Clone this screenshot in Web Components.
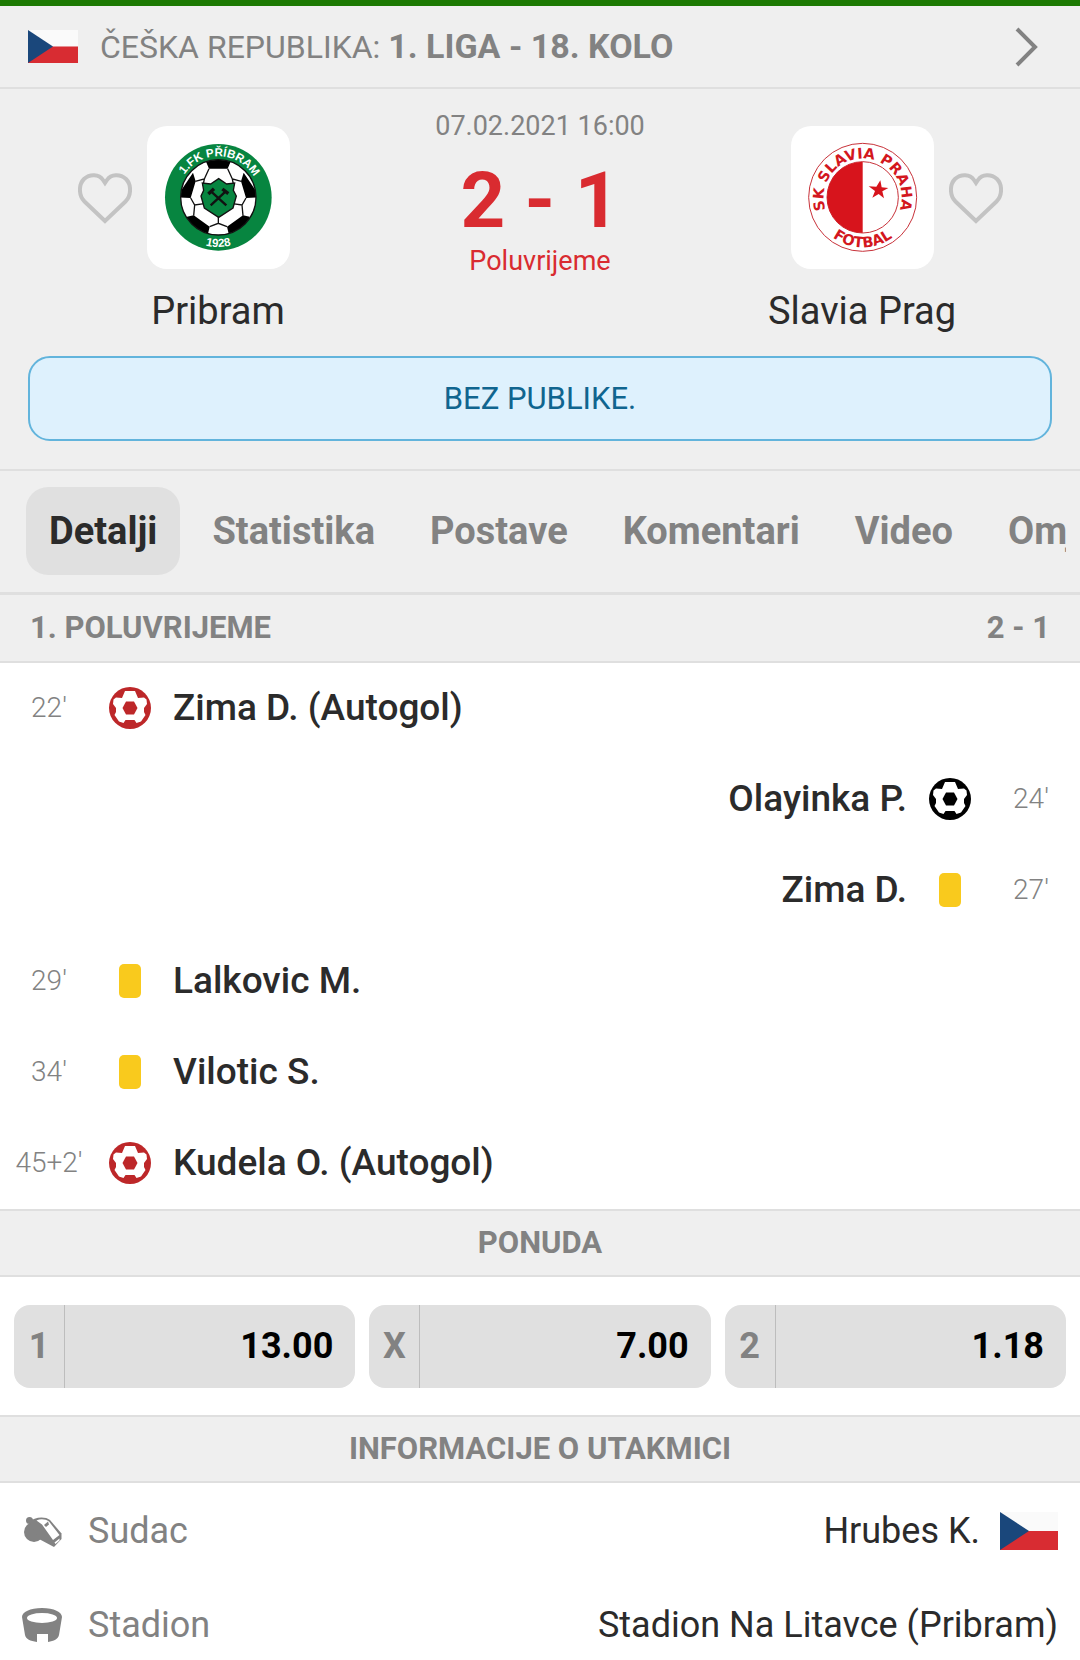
<!DOCTYPE html>
<html lang="hr">
<head>
    <meta charset="utf-8">
    <meta name="viewport" content="width=device-width, initial-scale=1">
    <title>Pribram - Slavia Prag</title>
    <style>
        :root {
            --panel: #efefef;
            --line: #dfdfdf;
            --chip: #e0e0e0;
            --muted: #828282;
            --ink: #2b2b2b;
            --red: #d92b30;
        }

        body {
            margin: 0;
            background: #fff;
            color: var(--ink);
            font-family: Roboto, "Liberation Sans", sans-serif;
            font-size: 36px;
            line-height: 46px;
        }

        main {
            display: flex;
            flex-direction: column;
        }
    </style>
</head>
<body>
    <main>
        <league-bar country="ČEŠKA REPUBLIKA:">1. LIGA - 18. KOLO</league-bar>

        <match-summary date="07.02.2021 16:00" score="2 - 1" status="Poluvrijeme">
            <team-card slot="home" name="Pribram"><pribram-crest></pribram-crest></team-card>
            <team-card slot="away" name="Slavia Prag" mirrored><slavia-crest></slavia-crest></team-card>
            <span slot="notice">BEZ PUBLIKE.</span>
        </match-summary>

        <tab-bar>
            <tab-item selected>Detalji</tab-item>
            <tab-item>Statistika</tab-item>
            <tab-item>Postave</tab-item>
            <tab-item>Komentari</tab-item>
            <tab-item>Video</tab-item>
            <tab-item>Omjer</tab-item>
        </tab-bar>

        <section-title split>1. POLUVRIJEME<span slot="end">2 - 1</span></section-title>
        <match-event time="22'" type="own-goal">Zima D. (Autogol)</match-event>
        <match-event time="24'" type="goal" away>Olayinka P.</match-event>
        <match-event time="27'" type="yellow" away>Zima D.</match-event>
        <match-event time="29'" type="yellow">Lalkovic M.</match-event>
        <match-event time="34'" type="yellow">Vilotic S.</match-event>
        <match-event time="45+2'" type="own-goal">Kudela O. (Autogol)</match-event>

        <section-title ruled>PONUDA</section-title>
        <odds-list>
            <odds-button label="1">13.00</odds-button>
            <odds-button label="X">7.00</odds-button>
            <odds-button label="2">1.18</odds-button>
        </odds-list>

        <section-title ruled>INFORMACIJE O UTAKMICI</section-title>
        <info-list>
            <info-row label="Sudac" icon="whistle">Hrubes K.<country-flag slot="flag" large></country-flag></info-row>
            <info-row label="Stadion" icon="stadium">Stadion Na Litavce (Pribram)</info-row>
        </info-list>
    </main>

    <script>
        // every component renders its html once into an open shadow root
        class BaseElement extends HTMLElement {
            constructor() {
                super();
                this.attachShadow({ mode: 'open' });
            }

            connectedCallback() {
                const template = document.createElement('template');
                template.innerHTML = this.render();
                this.shadowRoot.replaceChildren(template.content.cloneNode(true));
            }
        }

        class CountryFlag extends BaseElement {
            render() {
                return `
                    <style>
                        :host { display: block; flex: none; width: 50px; height: 33px; }
                        :host([large]) { width: 58px; height: 38px; }
                        svg { display: block; width: 100%; height: 100%; }
                    </style>
                    <svg viewBox="0 0 60 40" preserveAspectRatio="none" role="img" aria-label="Češka">
                        <path fill="#fafafa" d="M0 0h60v20H0z"/>
                        <path fill="#d82c32" d="M0 20h60v20H0z"/>
                        <path fill="#1a477b" d="M0 0l30 20L0 40z"/>
                    </svg>
                `;
            }
        }

        class LeagueBar extends BaseElement {
            render() {
                return `
                    <style>
                        :host {
                            display: block;
                            background: var(--panel);
                            border-top: 6px solid #1d7a03;
                            border-bottom: 2px solid var(--line);
                        }
                        a {
                            display: flex;
                            align-items: center;
                            gap: 22px;
                            padding: 17px 42px 17px 28px;
                            color: var(--muted);
                            font-size: 32px;
                            text-decoration: none;
                        }
                        .title { flex: 1; white-space: nowrap; }
                        b { font-size: 34px; }
                        svg { width: 24px; height: 40px; }
                    </style>
                    <a href="#liga">
                        <country-flag></country-flag>
                        <span class="title">${this.getAttribute('country')} <b><slot></slot></b></span>
                        <svg viewBox="0 0 24 40" fill="none" stroke="#828282" stroke-width="4" aria-hidden="true">
                            <path d="M3 2l18 18L3 38"/>
                        </svg>
                    </a>
                `;
            }
        }

        class MatchSummary extends BaseElement {
            render() {
                return `
                    <style>
                        :host {
                            display: flex;
                            flex-direction: column;
                            gap: 23px;
                            padding-bottom: 28px;
                            background: var(--panel);
                            border-bottom: 2px solid var(--line);
                        }
                        .teams { display: grid; grid-template-columns: 1fr 208px 1fr; }
                        .result {
                            display: flex;
                            flex-direction: column;
                            align-items: center;
                            padding-top: 21px;
                            font-size: 27px;
                            line-height: 32px;
                            white-space: nowrap;
                        }
                        .date { color: var(--muted); }
                        .score {
                            margin: 19px 0 4px;
                            color: var(--red);
                            font-size: 78px;
                            font-weight: 700;
                            line-height: 80px;
                        }
                        .status { color: var(--red); }
                        .notice {
                            margin: 0 28px;
                            padding: 18px;
                            border: 2px solid #62b4dc;
                            border-radius: 22px;
                            background: #def1fd;
                            color: #10658f;
                            font-size: 31px;
                            line-height: 45px;
                            text-align: center;
                        }
                    </style>
                    <div class="teams">
                        <slot name="home"></slot>
                        <div class="result">
                            <span class="date">${this.getAttribute('date')}</span>
                            <span class="score">${this.getAttribute('score')}</span>
                            <span class="status">${this.getAttribute('status')}</span>
                        </div>
                        <slot name="away"></slot>
                    </div>
                    <div class="notice"><slot name="notice"></slot></div>
                `;
            }
        }

        class TeamCard extends BaseElement {
            render() {
                return `
                    <style>
                        :host { display: block; padding-top: 37px; }
                        .row {
                            display: grid;
                            grid-template-columns: 1fr auto 1fr;
                            align-items: center;
                            column-gap: 15px;
                        }
                        .crest {
                            grid-column: 2;
                            grid-row: 1;
                            width: 143px;
                            height: 143px;
                            border-radius: 20px;
                            background: #fff;
                        }
                        button {
                            grid-column: 1;
                            grid-row: 1;
                            justify-self: end;
                            padding: 0;
                            border: 0;
                            background: none;
                        }
                        :host([mirrored]) button { grid-column: 3; justify-self: start; }
                        button svg { display: block; width: 54px; height: 52px; }
                        .name {
                            margin-top: 20px;
                            font-size: 38px;
                            line-height: 44px;
                            text-align: center;
                        }
                    </style>
                    <div class="row">
                        <button type="button" aria-label="Omiljeni tim: ${this.getAttribute('name')}">
                            <svg viewBox="0 0 54 52" fill="none" stroke="#c3c3c3" stroke-width="4">
                                <path d="M27 49L6.500 29.500C.5 23.500.5 12.500 6 7c6-5.500 15-5 19 1l2 3 2-3c4-6 13-6.500 19-1 5.500 5.500 5.500 16.500-.5 22.500z"/>
                            </svg>
                        </button>
                        <div class="crest"><slot></slot></div>
                    </div>
                    <div class="name">${this.getAttribute('name')}</div>
                `;
            }
        }

        class PribramCrest extends BaseElement {
            render() {
                return `
                    <style>
                        :host { display: block; }
                        svg { display: block; width: 100%; }
                        text { font: bold 35px "Liberation Sans", sans-serif; fill: #fff; text-anchor: middle; }
                    </style>
                    <svg viewBox="0 0 429 429">
                        <defs>
                            <clipPath id="ball"><circle cx="214" cy="214" r="113"/></clipPath>
                            <path id="top" d="M91 214a123 123 0 0 1 246 0"/>
                            <path id="bottom" d="M65 214a149 149 0 0 0 298 0"/>
                        </defs>
                        <circle cx="214" cy="214" r="160" fill="#078540"/>
                        <circle cx="214" cy="214" r="113" fill="#fff"/>
                        <g clip-path="url(#ball)">
                            <path d="M172 95h84l-14 33h-56zM290 140l50 74-43 2-15-50zM138 140l-50 74 43 2 15-50zM120 272l20-4 48 34-8 34-60-20zM308 272l-20-4-48 34 8 34 60-20z"/>
                            <path fill="none" stroke="#111" stroke-width="4" d="M186 128l-14 31-27 7M242 128l14 31 27 7M172 159l-4 20M256 159l4 20M131 216l12 21 29-4M297 216l-12 21-29-4M143 237l-3 32M285 237l3 32M188 302l26-10 26 10M214 292v-20"/>
                        </g>
                        <circle cx="214" cy="214" r="113" fill="none" stroke="#111" stroke-width="4"/>
                        <path fill="#078540" stroke="#111" stroke-width="4" d="M215 158l24 16 24-3-4 22 9 17-10 36-43 28-43-28-10-36 8-17-4-22 25 3z"/>
                        <g stroke="#111" stroke-width="7" fill="none">
                            <path d="M238 238l-46-42M191 238l45-42"/>
                            <path stroke-width="10" d="M184 204l17-16M226 189l18 14"/>
                        </g>
                        <text><textPath href="#top" startOffset="51%">1.FK PŘÍBRAM</textPath></text>
                        <text><textPath href="#bottom" startOffset="50%">1928</textPath></text>
                    </svg>
                `;
            }
        }

        class SlaviaCrest extends BaseElement {
            render() {
                return `
                    <style>
                        :host { display: block; }
                        svg { display: block; width: 100%; }
                        text { font: bold 44px "DejaVu Sans", sans-serif; fill: #d3171e; text-anchor: middle; }
                    </style>
                    <svg viewBox="0 0 429 429">
                        <defs>
                            <path id="top" d="M174 324a117 117 0 1 1 82 0"/>
                            <path id="bottom" d="M65 214a150 150 0 0 0 300 0"/>
                        </defs>
                        <g fill="none" stroke="#c8323a" stroke-width="3">
                            <circle cx="215" cy="214" r="162"/>
                            <circle cx="215" cy="214" r="107"/>
                        </g>
                        <path fill="#d7141c" d="M215 107a107 107 0 0 0 0 214z"/>
                        <path fill="#d7141c" d="M268 163l4 21 20 2-18 10 5 21-16-13-19 11 8-20-19-14 23 1z"/>
                        <text><textPath href="#top" startOffset="50%">SK SLAVIA PRAHA</textPath></text>
                        <text><textPath href="#bottom" startOffset="50%">FOTBAL</textPath></text>
                    </svg>
                `;
            }
        }

        class TabBar extends BaseElement {
            render() {
                return `
                    <style>
                        :host {
                            display: block;
                            padding: 16px 14px 17px 26px;
                            background: var(--panel);
                            border-bottom: 3px solid var(--line);
                        }
                        nav { display: flex; gap: 9px; overflow: hidden; }
                    </style>
                    <nav><slot></slot></nav>
                `;
            }
        }

        class TabItem extends BaseElement {
            render() {
                return `
                    <style>
                        :host { display: block; flex: none; }
                        button {
                            padding: 21px 23px;
                            border: 0;
                            border-radius: 22px;
                            background: none;
                            color: var(--muted);
                            font: inherit;
                            font-size: 38px;
                            font-weight: 700;
                        }
                        :host([selected]) button { background: var(--chip); color: var(--ink); }
                    </style>
                    <button type="button"><slot></slot></button>
                `;
            }
        }

        class SectionTitle extends BaseElement {
            render() {
                return `
                    <style>
                        :host {
                            display: block;
                            background: var(--panel);
                            border-bottom: 2px solid var(--line);
                        }
                        :host([ruled]) { border-top: 2px solid var(--line); }
                        h2 {
                            display: flex;
                            justify-content: center;
                            margin: 0;
                            padding: 9px 28px;
                            color: var(--muted);
                            font-size: 31px;
                            font-weight: 700;
                        }
                        :host([split]) h2 { justify-content: space-between; padding: 10px 30px; }
                    </style>
                    <h2><span><slot></slot></span><slot name="end"></slot></h2>
                `;
            }
        }

        class FootballIcon extends BaseElement {
            render() {
                return `
                    <style>
                        :host { display: block; }
                        svg { display: block; width: 42px; height: 42px; fill: currentColor; }
                    </style>
                    <svg viewBox="0 0 42 42" aria-hidden="true">
                        <circle cx="21" cy="21" r="21"/>
                        <path fill="#fff" d="M16 4h10l3 7 6-.5 2.500 2 .5 4.500-3 4v4l1.500 3-4.500 6.500-4.500 1.500-2-3h-9l-2 3-4.500-1.500-4.500-6.500 1.500-3v-4l-3-4 .5-4.500 2.500-2 6 .5z"/>
                        <path d="M17 14.500h8l3.500 6.500-3.500 6.500h-8L13.500 21z"/>
                    </svg>
                `;
            }
        }

        class MatchEvent extends BaseElement {
            render() {
                const type = this.getAttribute('type');
                const icon = type === 'yellow'
                    ? '<span class="card"></span>'
                    : `<football-icon class="${type}"></football-icon>`;

                return `
                    <style>
                        :host { display: block; }
                        .event {
                            display: flex;
                            align-items: center;
                            gap: 22px;
                            padding: 22px 11px 23px;
                            font-size: 37px;
                            font-weight: 500;
                        }
                        :host([away]) .event { flex-direction: row-reverse; }
                        .time {
                            width: 76px;
                            color: var(--muted);
                            font-size: 28px;
                            font-weight: 300;
                            text-align: center;
                        }
                        .icon { display: flex; justify-content: center; width: 42px; }
                        .goal { color: #000; }
                        .own-goal { color: #bd2729; }
                        .card { width: 22px; height: 34px; border-radius: 5px; background: #f9ca1d; }
                    </style>
                    <div class="event">
                        <span class="time">${this.getAttribute('time')}</span>
                        <span class="icon">${icon}</span>
                        <span><slot></slot></span>
                    </div>
                `;
            }
        }

        class OddsList extends BaseElement {
            render() {
                return `
                    <style>
                        :host {
                            display: grid;
                            grid-template-columns: repeat(3, 1fr);
                            gap: 14px;
                            padding: 28px 14px 27px;
                        }
                    </style>
                    <slot></slot>
                `;
            }
        }

        class OddsButton extends BaseElement {
            render() {
                return `
                    <style>
                        :host { display: block; }
                        button {
                            display: flex;
                            width: 100%;
                            padding: 0;
                            border: 0;
                            border-radius: 16px;
                            background: var(--chip);
                            color: #000;
                            font: inherit;
                            font-weight: 700;
                            line-height: 83px;
                        }
                        .label { width: 50px; border-right: 1px solid #bdbdbd; color: var(--muted); }
                        .value { flex: 1; padding-right: 22px; text-align: right; }
                    </style>
                    <button type="button">
                        <span class="label">${this.getAttribute('label')}</span>
                        <span class="value"><slot></slot></span>
                    </button>
                `;
            }
        }

        class InfoList extends BaseElement {
            render() {
                return `
                    <style>
                        :host {
                            display: flex;
                            flex-direction: column;
                            gap: 48px;
                            padding: 25px 22px 11px;
                        }
                    </style>
                    <slot></slot>
                `;
            }
        }

        const INFO_ICONS = {
            whistle: `
                <circle cx="12" cy="21" r="10"/>
                <circle cx="7.500" cy="9.500" r="3.500"/>
                <path d="M7 11c5-5 16-6 21-2l11.500 13.500V28L32 36 17 28z"/>
                <path fill="#fff" d="M14.500 9.500c4-2 9-1.500 12.500 1L37.500 24 31 29 20 13.500z"/>
                <path fill="#fff" d="M32.500 31.500l5-4v2l-4 3.500z"/>
                <path d="M22 14l4-3.500 1 3-3 2.500z"/>`,
            stadium: `
                <path d="M20 3c12 0 20 4 20 9l-3 18c-1 4-5 6-11 7v-8H15v8C8 36 4 34 3 30L0 12c0-5 8-9 20-9z"/>
                <ellipse cx="20" cy="13" rx="15" ry="5" fill="#fff"/>`,
        };

        class InfoRow extends BaseElement {
            render() {
                return `
                    <style>
                        :host { display: flex; align-items: center; gap: 20px; }
                        .lead { display: flex; flex: 1; align-items: center; gap: 24px; color: var(--muted); }
                        svg { width: 42px; height: 40px; fill: currentColor; }
                    </style>
                    <span class="lead">
                        <svg viewBox="0 0 42 40" aria-hidden="true">${INFO_ICONS[this.getAttribute('icon')]}</svg>
                        <span>${this.getAttribute('label')}</span>
                    </span>
                    <span><slot></slot></span>
                    <slot name="flag"></slot>
                `;
            }
        }

        customElements.define('country-flag', CountryFlag);
        customElements.define('league-bar', LeagueBar);
        customElements.define('match-summary', MatchSummary);
        customElements.define('team-card', TeamCard);
        customElements.define('pribram-crest', PribramCrest);
        customElements.define('slavia-crest', SlaviaCrest);
        customElements.define('tab-bar', TabBar);
        customElements.define('tab-item', TabItem);
        customElements.define('section-title', SectionTitle);
        customElements.define('football-icon', FootballIcon);
        customElements.define('match-event', MatchEvent);
        customElements.define('odds-list', OddsList);
        customElements.define('odds-button', OddsButton);
        customElements.define('info-list', InfoList);
        customElements.define('info-row', InfoRow);
    </script>
</body>
</html>
